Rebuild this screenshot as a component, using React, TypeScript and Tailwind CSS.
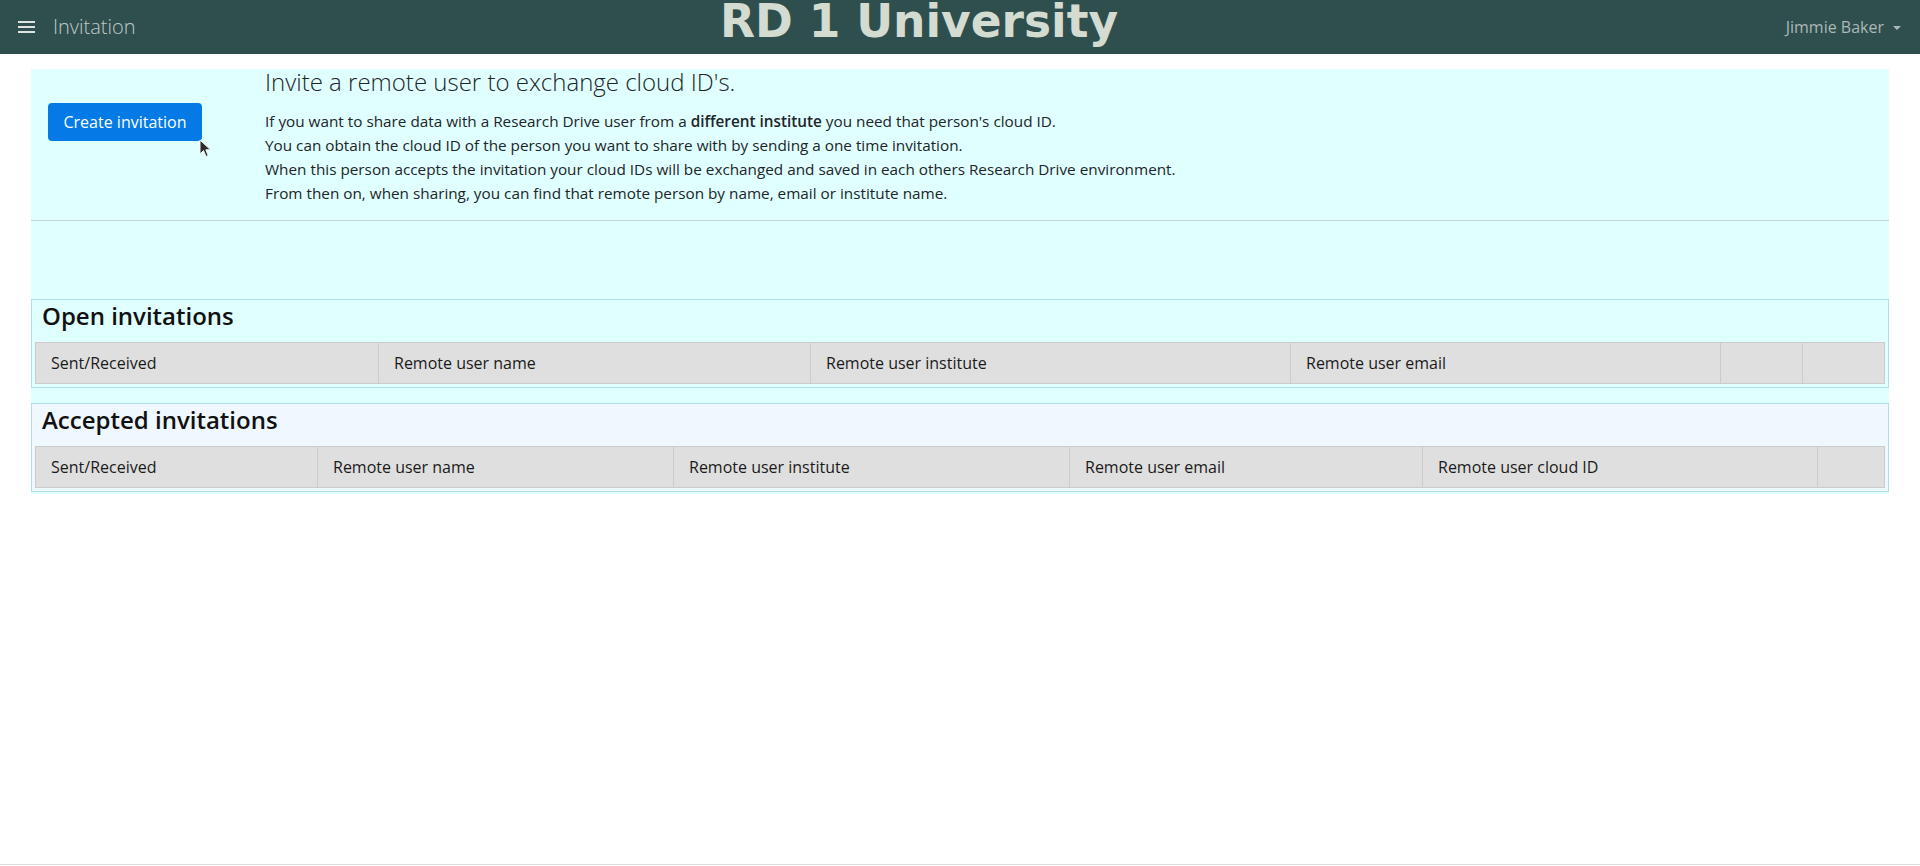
import React from 'react'

const openCols = [
  { label: 'Sent/Received', w: 'w-[343px]' },
  { label: 'Remote user name', w: 'w-[432px]' },
  { label: 'Remote user institute', w: 'w-[480px]' },
  { label: 'Remote user email', w: 'w-[430px]' },
  { label: '', w: 'w-[82px]' },
  { label: '', w: 'w-[82px]' }
]

const acceptedCols = [
  { label: 'Sent/Received', w: 'w-[282px]' },
  { label: 'Remote user name', w: 'w-[356px]' },
  { label: 'Remote user institute', w: 'w-[396px]' },
  { label: 'Remote user email', w: 'w-[353px]' },
  { label: 'Remote user cloud ID', w: 'w-[395px]' },
  { label: '', w: 'w-[67px]' }
]

function Navbar() {
  return (
    <nav className="h-[54px] bg-[#2f4f4f] flex items-center pl-[18px] pr-[19px]">
      <div className="w-[702px] flex items-center self-center">
        <div className="flex flex-col gap-[3px]">
          <span className="block w-[17px] h-[2px] bg-[#dfe4e3]" />
          <span className="block w-[17px] h-[2px] bg-[#dfe4e3]" />
          <span className="block w-[17px] h-[2px] bg-[#dfe4e3]" />
        </div>
        <span className="ml-[18px] text-[20px] font-light text-[#c0c9c8]">Invitation</span>
      </div>
      <h1
        className="self-start pt-[1px] text-[45.5px] leading-[42px] font-bold text-[#d4dbd1]"
        style={{ fontFamily: '"DejaVu Sans", sans-serif' }}
      >
        RD 1 University
      </h1>
      <div className="ml-auto flex items-center text-[16px] text-[#aab8b6]">
        Jimmie Baker
        <span className="ml-[9px] mt-[1px] w-0 h-0 border-l-[4px] border-r-[4px] border-t-[4px] border-l-transparent border-r-transparent border-t-[#aab8b6]" />
      </div>
    </nav>
  )
}

function Cursor() {
  return (
    <svg className="absolute left-[151px] top-[36px]" width="14" height="20" viewBox="0 0 14 20">
      <path d="M1 1 L1 15 L4.5 11.5 L7 17.5 L9.2 16.6 L6.8 10.8 L11.5 10.8 Z" fill="#2b2b2b" stroke="#f4f4f4" strokeWidth="1" />
    </svg>
  )
}

function InvitationTable({ title, cols, accepted }: { title: string; cols: { label: string; w: string }[]; accepted?: boolean }) {
  return (
    <div className={`border border-[#b0e0e6] ${accepted ? 'bg-[#f0f8ff]' : ''}`}>
      <h4 className="mt-[1px] ml-[10px] mb-[12px] text-[24px] leading-[29px] font-semibold text-[#111]">{title}</h4>
      <div className="mx-[3px] mb-[3px]">
        <table className="w-full border-collapse table-fixed">
          <thead>
            <tr className="bg-[#dfdfdf]">
              {cols.map((c, i) => (
                <th
                  key={i}
                  className={`${c.w} border border-[#cbcbcb] px-[15px] py-[8px] text-left text-[16px] leading-6 font-normal text-[#1a1a1a]`}
                >
                  {c.label}
                </th>
              ))}
            </tr>
          </thead>
        </table>
      </div>
    </div>
  )
}

export default function App() {
  return (
    <div className="min-h-screen flex flex-col bg-white" style={{ fontFamily: '"Open Sans", "Noto Sans", sans-serif' }}>
      <Navbar />
      <main className="flex-1 px-[31px] pt-[15px]">
        <div className="bg-[#e0ffff] pb-[2px]">
          {/* intro */}
          <div className="flex">
            <div className="w-[234px] shrink-0 pl-[17px] pt-[34px]">
              <div className="relative">
                <button className="h-[38px] w-[154px] rounded-[4px] bg-[#047ae6] text-white text-[16px]">
                  Create invitation
                </button>
                <Cursor />
              </div>
            </div>
            <div className="text-[#212529]">
              <h2 className="text-[24px] leading-[25px] font-light">Invite a remote user to exchange cloud ID's.</h2>
              <div className="mt-[15px] text-[15.3px] leading-6">
                <p>
                  If you want to share data with a Research Drive user from a <b className="font-semibold">different institute</b> you need that person's cloud ID.
                </p>
                <p>You can obtain the cloud ID of the person you want to share with by sending a one time invitation.</p>
                <p>When this person accepts the invitation your cloud IDs will be exchanged and saved in each others Research Drive environment.</p>
                <p>From then on, when sharing, you can find that remote person by name, email or institute name.</p>
              </div>
            </div>
          </div>
          <hr className="mt-[15px] border-t border-[#c9d5d5]" />

          <div className="mt-[78px]">
            <InvitationTable title="Open invitations" cols={openCols} />
          </div>
          <div className="mt-[15px]">
            <InvitationTable title="Accepted invitations" cols={acceptedCols} accepted />
          </div>
        </div>
      </main>
      <div className="h-[2px] border-t border-[#dcdcdc]" />
    </div>
  )
}
